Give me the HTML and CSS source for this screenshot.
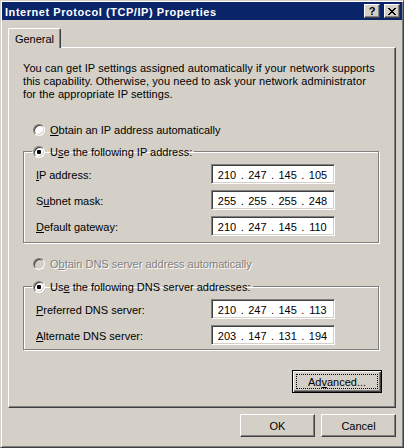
FILE: index.html
```html
<!DOCTYPE html>
<html>
<head>
<meta charset="utf-8">
<link rel="stylesheet" href="styles.css">
</head>
<body>
<div class="window">
  <div class="titlebar">
    <span class="title">Internet Protocol (TCP/IP) Properties</span>
    <div class="caption-buttons">
      <span class="cbtn help">?</span>
      <span class="cbtn close"><svg width="8" height="7" viewBox="0 0 8 7"><path d="M0 0h2v1H0zM6 0h2v1H6zM1 1h2v1H1zM5 1h2v1H5zM2 2h4v1H2zM3 3h2v1H3zM2 4h4v1H2zM1 5h2v1H1zM5 5h2v1H5zM0 6h2v1H0zM6 6h2v1H6z" fill="#000"/></svg></span>
    </div>
  </div>
  <div class="client">
    <div class="tabs"><div class="tab">General</div></div>
    <div class="panel">
      <p class="intro">You can get IP settings assigned automatically if your network supports<br>this capability. Otherwise, you need to ask your network administrator<br>for the appropriate IP settings.</p>

      <div class="radio-row r-ip"><span class="radio"></span><span class="txt"><u>O</u>btain an IP address automatically</span></div>

      <fieldset class="group g-ip">
        <legend class="legend"><span class="radio checked"></span><span class="txt">U<u>s</u>e the following IP address:</span></legend>
        <div class="field-row"><span class="label"><u>I</u>P address:</span>
          <div class="ipbox"><span class="oct">210</span><span class="dot">.</span><span class="oct">247</span><span class="dot">.</span><span class="oct">145</span><span class="dot">.</span><span class="oct">105</span></div></div>
        <div class="field-row"><span class="label">S<u>u</u>bnet mask:</span>
          <div class="ipbox"><span class="oct">255</span><span class="dot">.</span><span class="oct">255</span><span class="dot">.</span><span class="oct">255</span><span class="dot">.</span><span class="oct">248</span></div></div>
        <div class="field-row"><span class="label"><u>D</u>efault gateway:</span>
          <div class="ipbox"><span class="oct">210</span><span class="dot">.</span><span class="oct">247</span><span class="dot">.</span><span class="oct">145</span><span class="dot">.</span><span class="oct">110</span></div></div>
      </fieldset>

      <div class="radio-row r-dns disabled"><span class="radio"></span><span class="txt">O<u>b</u>tain DNS server address automatically</span></div>

      <fieldset class="group g-dns">
        <legend class="legend"><span class="radio checked"></span><span class="txt">Us<u>e</u> the following DNS server addresses:</span></legend>
        <div class="field-row"><span class="label"><u>P</u>referred DNS server:</span>
          <div class="ipbox"><span class="oct">210</span><span class="dot">.</span><span class="oct">247</span><span class="dot">.</span><span class="oct">145</span><span class="dot">.</span><span class="oct">113</span></div></div>
        <div class="field-row"><span class="label"><u>A</u>lternate DNS server:</span>
          <div class="ipbox"><span class="oct">203</span><span class="dot">.</span><span class="oct">147</span><span class="dot">.</span><span class="oct">131</span><span class="dot">.</span><span class="oct">194</span></div></div>
      </fieldset>

      <div class="adv-row"><button class="btn default"><span class="focus"><span class="btxt">Ad<u>v</u>anced...</span></span></button></div>
    </div>
    <div class="dialog-buttons">
      <button class="btn"><span class="btxt">OK</span></button>
      <button class="btn"><span class="btxt">Cancel</span></button>
    </div>
  </div>
</div>
</body>
</html>
```

FILE: styles.css
```css
html, body {
  margin: 0;
  padding: 0;
  background: #d4d0c8;
}

body {
  font-family: "Liberation Sans", Arial, sans-serif;
  font-size: 11px;
  line-height: 13px;
  color: #000;
}

.window {
  width: 404px;
  height: 448px;
  box-sizing: border-box;
  background: #d4d0c8;
  border: 1px solid;
  border-color: #d4d0c8 #404040 #404040 #d4d0c8;
  box-shadow: inset 1px 1px #fff, inset -1px -1px #808080;
  padding: 1px;
  display: flex;
  flex-direction: column;
}

.titlebar {
  height: 18px;
  background: #0a246a;
  display: flex;
  align-items: center;
  justify-content: space-between;
  flex: none;
}

.title {
  color: #fff;
  font-weight: bold;
  font-size: 11px;
  letter-spacing: 0.55px;
  padding-left: 3px;
  padding-top: 2px;
  white-space: nowrap;
}

.caption-buttons {
  display: flex;
  gap: 4px;
  margin-right: 2px;
}

.cbtn {
  width: 16px;
  height: 14px;
  box-sizing: border-box;
  background: #d4d0c8;
  border: 1px solid;
  border-color: #fff #404040 #404040 #fff;
  box-shadow: inset -1px -1px #808080;
  display: flex;
  align-items: center;
  justify-content: center;
}

.help {
  font-weight: bold;
  font-size: 11px;
  line-height: 11px;
  padding-top: 1px;
}

.close svg {
  display: block;
  margin-left: -1px;
}

.client {
  flex: 1;
  padding: 8px 6px 7px 6px;
  display: flex;
  flex-direction: column;
}

.tabs {
  display: flex;
  height: 20px;
  margin-bottom: -1px;
  position: relative;
  z-index: 1;
}

.tab {
  width: 53px;
  height: 20px;
  box-sizing: border-box;
  background: #d4d0c8;
  border-left: 1px solid #fff;
  border-top: 1px solid #fff;
  border-right: 1px solid #404040;
  box-shadow: inset -1px 0 #808080;
  border-radius: 2px 2px 0 0;
  display: flex;
  align-items: center;
  justify-content: center;
  padding-top: 1px;
}

.panel {
  height: 361px;
  box-sizing: border-box;
  border: 1px solid;
  border-color: #fff #404040 #404040 #fff;
  box-shadow: inset -1px -1px #808080;
  padding: 13px 13px 0 14px;
  display: flex;
  flex-direction: column;
  flex: none;
}

.intro {
  margin: 0;
  padding-top: 1px;
  white-space: nowrap;
  letter-spacing: 0.08px;
}

.radio-row {
  display: flex;
  height: 13px;
  padding-left: 10px;
  white-space: nowrap;
}

.r-ip { margin-top: 22px; }
.r-dns { margin-top: 14px; }

.txt {
  padding-top: 1px;
}

.radio {
  width: 12px;
  height: 12px;
  box-sizing: border-box;
  border-radius: 50%;
  border: 1px solid;
  border-color: #808080 #fff #fff #808080;
  box-shadow: inset 1px 1px #404040, inset -1px -1px #d4d0c8;
  background: #fff;
  margin-top: 1px;
  margin-right: 5px;
  flex: none;
  display: flex;
  align-items: center;
  justify-content: center;
}

.radio.checked::after {
  content: "";
  width: 4px;
  height: 4px;
  border-radius: 1px;
  background: #000;
}

.disabled {
  color: #808080;
  text-shadow: 1px 1px 0 #fff;
}

.disabled .radio {
  background: #d4d0c8;
}

.group {
  margin: 0;
  padding: 6px 0;
  width: 356px;
  box-sizing: border-box;
  min-width: 0;
  border: 1px solid #808080;
  box-shadow: inset 1px 1px #fff, 1px 1px #fff;
}

.g-ip { margin-top: 9px; }
.g-dns { margin-top: 10px; padding-bottom: 4px; }

.legend {
  display: flex;
  height: 13px;
  margin-left: 8px;
  padding: 0 2px 0 1px;
  white-space: nowrap;
}

.field-row {
  display: flex;
  align-items: center;
  height: 20px;
  padding-left: 12px;
}

.field-row + .field-row {
  margin-top: 6px;
}

.label {
  width: 175px;
  flex: none;
  padding-top: 2px;
}

.ipbox {
  width: 124px;
  height: 20px;
  box-sizing: border-box;
  background: #fff;
  border: 1px solid;
  border-color: #808080 #fff #fff #808080;
  box-shadow: inset 1px 1px #404040, inset -1px -1px #d4d0c8;
  display: flex;
  align-items: center;
  padding-left: 5px;
}

.oct {
  width: 20px;
  text-align: center;
  flex: none;
  padding-top: 2px;
}

.dot {
  width: 10.33px;
  text-align: center;
  flex: none;
  padding-top: 2px;
}

.adv-row {
  margin-top: 20px;
  display: flex;
  justify-content: flex-end;
}

.btn {
  appearance: none;
  margin: 0;
  font: inherit;
  color: #000;
  width: 75px;
  height: 23px;
  box-sizing: border-box;
  background: #d4d0c8;
  border: 1px solid;
  border-color: #fff #404040 #404040 #fff;
  box-shadow: inset -1px -1px #808080;
  padding: 0;
  display: flex;
  align-items: center;
  justify-content: center;
}

.btxt {
  padding-top: 2px;
}

.btn.default {
  width: 90px;
  border: 1px solid #000;
  box-shadow: inset 1px 1px #fff, inset -1px -1px #404040, inset -2px -2px #808080;
  padding: 3px;
}

.focus {
  flex: 1;
  align-self: stretch;
  border: 1px dotted #000;
  display: flex;
  align-items: center;
  justify-content: center;
}

.dialog-buttons {
  margin-top: 6px;
  display: flex;
  justify-content: flex-end;
  gap: 6px;
}
```
